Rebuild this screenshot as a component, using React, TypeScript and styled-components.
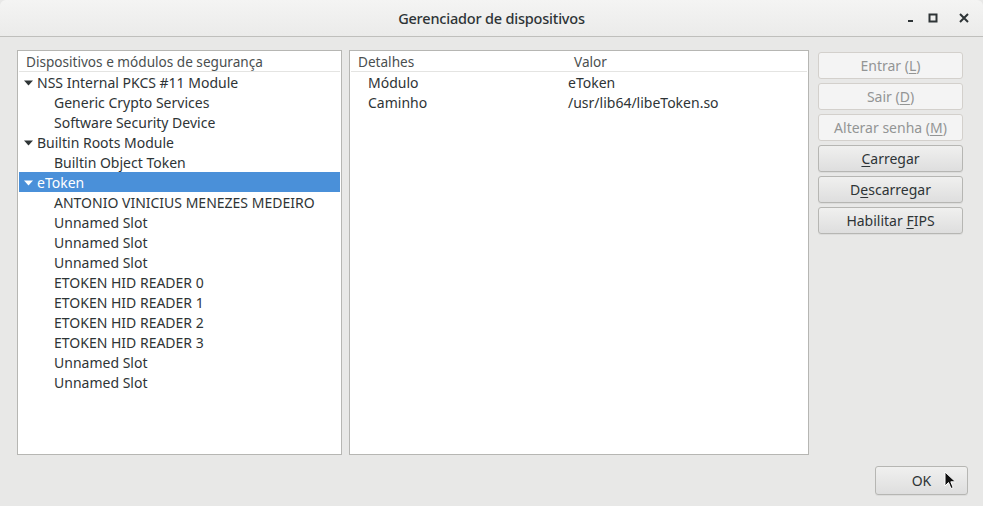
import React from "react";
import styled, { createGlobalStyle } from "styled-components";

const Global = createGlobalStyle`
  html, body { margin: 0; padding: 0; background: #e8e8e7; }
  body { font-family: "Noto Sans", "Open Sans", sans-serif; }
`;

const Window = styled.div`
  width: 983px;
  height: 506px;
  display: flex;
  flex-direction: column;
  background: #e8e8e7;
  overflow: hidden;
  position: relative;
`;

const TitleBar = styled.div`
  height: 36px;
  flex: 0 0 36px;
  display: flex;
  align-items: center;
  justify-content: center;
  position: relative;
  background: linear-gradient(#f4f4f3, #ebebea);
  border-bottom: 1px solid #bfbfbc;
  border-radius: 6px 6px 0 0;
`;

const Title = styled.div`
  font-family: "Noto Sans", sans-serif;
  font-size: 14.5px;
  font-weight: 500;
  color: #2e3436;
  letter-spacing: -0.2px;
`;

const Controls = styled.div`
  position: absolute;
  right: 14px;
  top: 0;
  height: 36px;
  display: flex;
  align-items: center;
`;

const Ctl = styled.span<{ $ml: number }>`
  margin-left: ${(p) => p.$ml}px;
  display: inline-flex;
`;

const Body = styled.div`
  flex: 1;
  display: flex;
  flex-direction: column;
  padding: 13px 15px 13px 17px;
`;

const Main = styled.div`
  display: flex;
  height: 405px;
`;

const Panel = styled.div<{ $w: number; $ml?: number }>`
  width: ${(p) => p.$w}px;
  margin-left: ${(p) => p.$ml ?? 0}px;
  height: 405px;
  box-sizing: border-box;
  background: #fff;
  border: 1px solid #b6b6b3;
  display: flex;
  flex-direction: column;
  padding: 0 1px;
`;

const Header = styled.div`
  height: 20px;
  display: flex;
  align-items: center;
  border-bottom: 1px solid #e4e4e2;
  font-size: 13.6px;
  color: #4a4f50;
`;

const HeaderCell = styled.div<{ $w?: number; $pl: number }>`
  width: ${(p) => (p.$w ? `${p.$w}px` : "auto")};
  padding-left: ${(p) => p.$pl}px;
  box-sizing: border-box;
  white-space: nowrap;
`;

const Row = styled.div<{ $sel?: boolean; $indent: number }>`
  height: 20px;
  box-sizing: border-box;
  padding-top: 1px;
  display: flex;
  align-items: center;
  padding-left: ${(p) => p.$indent}px;
  font-size: 14px;
  color: ${(p) => (p.$sel ? "#fff" : "#2e3436")};
  background: ${(p) => (p.$sel ? "#4a90d9" : "transparent")};
  white-space: nowrap;
`;

const Arrow = styled.span`
  width: 13px;
  display: inline-flex;
  align-items: center;
  justify-content: flex-start;
  padding-left: 1px;
`;

const Cell = styled.div<{ $w?: number; $pl: number }>`
  width: ${(p) => (p.$w ? `${p.$w}px` : "auto")};
  padding-left: ${(p) => p.$pl}px;
  box-sizing: border-box;
`;

const DetailRow = styled.div`
  height: 20px;
  box-sizing: border-box;
  padding-top: 1px;
  display: flex;
  align-items: center;
  font-size: 14px;
  color: #2e3436;
  white-space: nowrap;
`;

const Buttons = styled.div`
  width: 145px;
  margin-left: 9px;
  padding-top: 2px;
  display: flex;
  flex-direction: column;
  gap: 4px;
`;

const Btn = styled.div<{ $disabled?: boolean }>`
  height: 27px;
  box-sizing: border-box;
  border: 1px solid ${(p) => (p.$disabled ? "#d3d0cc" : "#b6b6b3")};
  border-radius: 3px;
  display: flex;
  align-items: center;
  justify-content: center;
  font-size: 14px;
  color: ${(p) => (p.$disabled ? "#939595" : "#2e3436")};
  background: ${(p) =>
    p.$disabled ? "#f4f4f4" : "linear-gradient(#f0f0ef, #dedede)"};
  box-shadow: ${(p) => (p.$disabled ? "none" : "0 1px 0 rgba(0,0,0,0.05)")};
`;

const Footer = styled.div`
  margin-top: 11px;
  display: flex;
  justify-content: flex-end;
`;

const OkBtn = styled(Btn)`
  width: 93px;
  height: 29px;
  position: relative;
`;

const Cursor = styled.svg`
  position: absolute;
  left: 68px;
  top: 4px;
`;

const U = styled.span`
  text-decoration: underline;
  text-underline-offset: 2px;
`;

const Tri = ({ color }: { color: string }) => (
  <svg width="9" height="6" viewBox="0 0 9 6">
    <path d="M0 0.5 L9 0.5 L4.5 5.5 Z" fill={color} />
  </svg>
);

type Item = { label: string; level: 0 | 1; sel?: boolean };

const items: Item[] = [
  { label: "NSS Internal PKCS #11 Module", level: 0 },
  { label: "Generic Crypto Services", level: 1 },
  { label: "Software Security Device", level: 1 },
  { label: "Builtin Roots Module", level: 0 },
  { label: "Builtin Object Token", level: 1 },
  { label: "eToken", level: 0, sel: true },
  { label: "ANTONIO VINICIUS MENEZES MEDEIRO", level: 1 },
  { label: "Unnamed Slot", level: 1 },
  { label: "Unnamed Slot", level: 1 },
  { label: "Unnamed Slot", level: 1 },
  { label: "ETOKEN HID READER 0", level: 1 },
  { label: "ETOKEN HID READER 1", level: 1 },
  { label: "ETOKEN HID READER 2", level: 1 },
  { label: "ETOKEN HID READER 3", level: 1 },
  { label: "Unnamed Slot", level: 1 },
  { label: "Unnamed Slot", level: 1 },
];

export default function App() {
  return (
    <>
      <Global />
      <Window>
        <TitleBar>
          <Title>Gerenciador de dispositivos</Title>
          <Controls>
            <Ctl $ml={0}>
              <svg width="8" height="10" viewBox="0 0 8 10">
                <rect x="1" y="7" width="5" height="2" fill="#2e3436" />
              </svg>
            </Ctl>
            <Ctl $ml={13}>
              <svg width="10" height="10" viewBox="0 0 10 10">
                <rect x="1.5" y="1.5" width="7" height="7" fill="none" stroke="#2e3436" strokeWidth="2" />
              </svg>
            </Ctl>
            <Ctl $ml={21}>
              <svg width="10" height="10" viewBox="0 0 10 10">
                <path d="M1 1 L9 9 M9 1 L1 9" stroke="#2e3436" strokeWidth="2" />
              </svg>
            </Ctl>
          </Controls>
        </TitleBar>
        <Body>
          <Main>
            <Panel $w={325}>
              <Header>
                <HeaderCell $pl={7}>Dispositivos e módulos de segurança</HeaderCell>
              </Header>
              {items.map((it, i) => (
                <Row key={i} $sel={it.sel} $indent={it.level === 0 ? 4 : 35}>
                  {it.level === 0 && (
                    <Arrow>
                      <Tri color={it.sel ? "#fff" : "#2e3436"} />
                    </Arrow>
                  )}
                  <span>{it.label}</span>
                </Row>
              ))}
            </Panel>
            <Panel $w={460} $ml={7}>
              <Header>
                <HeaderCell $w={200} $pl={7}>Detalhes</HeaderCell>
                <HeaderCell $pl={23}>Valor</HeaderCell>
              </Header>
              <DetailRow>
                <Cell $w={200} $pl={17}>Módulo</Cell>
                <Cell $pl={17}>eToken</Cell>
              </DetailRow>
              <DetailRow>
                <Cell $w={200} $pl={17}>Caminho</Cell>
                <Cell $pl={17}>/usr/lib64/libeToken.so</Cell>
              </DetailRow>
            </Panel>
            <Buttons>
              <Btn $disabled>
                <span>Entrar (<U>L</U>)</span>
              </Btn>
              <Btn $disabled>
                <span>Sair (<U>D</U>)</span>
              </Btn>
              <Btn $disabled>
                <span>Alterar senha (<U>M</U>)</span>
              </Btn>
              <Btn>
                <span><U>C</U>arregar</span>
              </Btn>
              <Btn>
                <span>D<U>e</U>scarregar</span>
              </Btn>
              <Btn>
                <span>Habilitar <U>F</U>IPS</span>
              </Btn>
            </Buttons>
          </Main>
          <Footer>
            <OkBtn>
              <span>OK</span>
              <Cursor width="13" height="20" viewBox="0 0 13 20">
                <path d="M1 1 L1 15 L4.5 11.5 L7 17.5 L9.2 16.6 L6.8 10.8 L11.5 10.8 Z" fill="#111" stroke="#fff" strokeWidth="1" />
              </Cursor>
            </OkBtn>
          </Footer>
        </Body>
      </Window>
    </>
  );
}
